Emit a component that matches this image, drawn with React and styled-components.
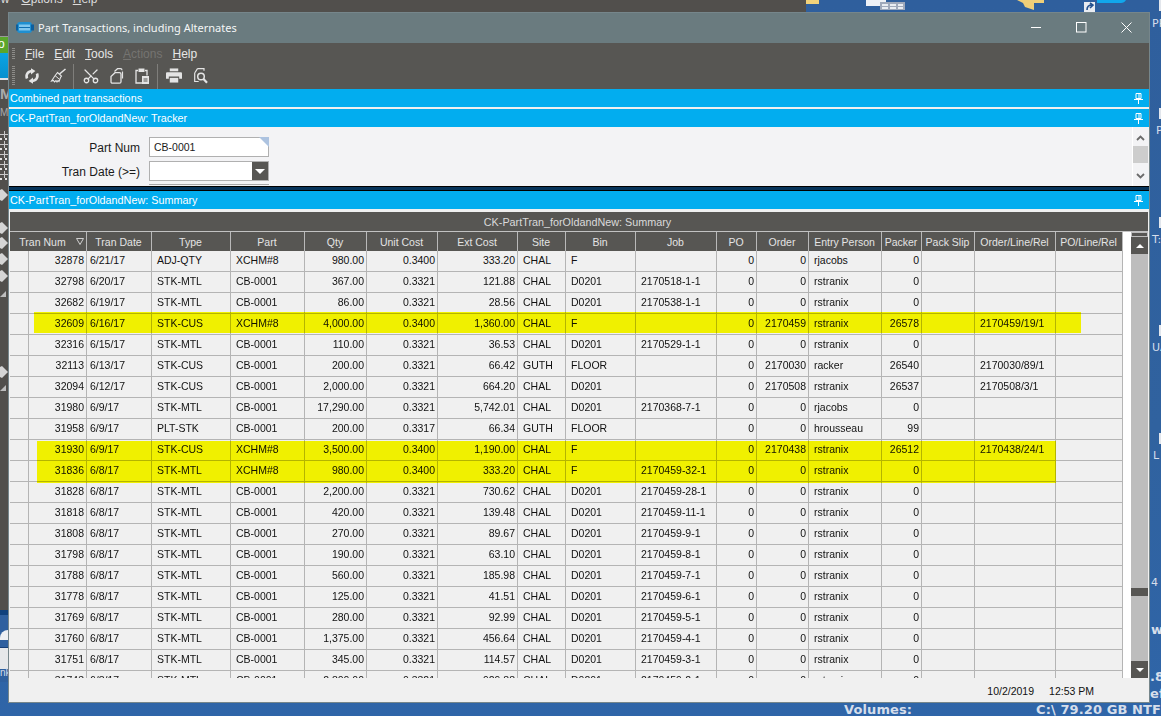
import React from "react";
import styled, { createGlobalStyle } from "styled-components";
import { Scissors } from "lucide-react";

const GlobalStyle = createGlobalStyle`
  html, body {
    margin: 0;
    padding: 0;
    width: 1161px;
    height: 716px;
    overflow: hidden;
    background: #2f609f;
    font-family: "Liberation Sans", Arial, sans-serif;
  }
`;

const columns = [
  { key: "mark", w: 19 },
  { key: "num", w: 58, align: "right" },
  { key: "date", w: 65, pad: 3 },
  { key: "type", w: 79 },
  { key: "part", w: 74 },
  { key: "qty", w: 62, align: "right" },
  { key: "unit", w: 71, align: "right" },
  { key: "ext", w: 80, align: "right" },
  { key: "site", w: 48 },
  { key: "bin", w: 70 },
  { key: "job", w: 81 },
  { key: "po", w: 40, align: "right" },
  { key: "order", w: 52, align: "right" },
  { key: "person", w: 73 },
  { key: "packer", w: 40, align: "right" },
  { key: "slip", w: 53 },
  { key: "rel", w: 81 },
  { key: "poline", w: 67 },
];
const template = columns.map((c) => c.w + "px").join(" ");

const heads = [
  "Tran Date", "Type", "Part", "Qty", "Unit Cost", "Ext Cost", "Site", "Bin", "Job", "PO",
  "Order", "Entry Person", "Packer", "Pack Slip", "Order/Line/Rel", "PO/Line/Rel",
];

const row = (num, date, type, part, qty, unit, ext, site, bin, job, order, person, packer, rel) => ({
  mark: "", num, date, type, part, qty, unit, ext, site, bin, job, po: "0", order, person, packer, slip: "", rel, poline: "",
});

const rows = [
  row("32878", "6/21/17", "ADJ-QTY", "XCHM#8", "980.00", "0.3400", "333.20", "CHAL", "F", "", "0", "rjacobs", "0", ""),
  row("32798", "6/20/17", "STK-MTL", "CB-0001", "367.00", "0.3321", "121.88", "CHAL", "D0201", "2170518-1-1", "0", "rstranix", "0", ""),
  row("32682", "6/19/17", "STK-MTL", "CB-0001", "86.00", "0.3321", "28.56", "CHAL", "D0201", "2170538-1-1", "0", "rstranix", "0", ""),
  row("32609", "6/16/17", "STK-CUS", "XCHM#8", "4,000.00", "0.3400", "1,360.00", "CHAL", "F", "", "2170459", "rstranix", "26578", "2170459/19/1"),
  row("32316", "6/15/17", "STK-MTL", "CB-0001", "110.00", "0.3321", "36.53", "CHAL", "D0201", "2170529-1-1", "0", "rstranix", "0", ""),
  row("32113", "6/13/17", "STK-CUS", "CB-0001", "200.00", "0.3321", "66.42", "GUTH", "FLOOR", "", "2170030", "racker", "26540", "2170030/89/1"),
  row("32094", "6/12/17", "STK-CUS", "CB-0001", "2,000.00", "0.3321", "664.20", "CHAL", "D0201", "", "2170508", "rstranix", "26537", "2170508/3/1"),
  row("31980", "6/9/17", "STK-MTL", "CB-0001", "17,290.00", "0.3321", "5,742.01", "CHAL", "D0201", "2170368-7-1", "0", "rjacobs", "0", ""),
  row("31958", "6/9/17", "PLT-STK", "CB-0001", "200.00", "0.3317", "66.34", "GUTH", "FLOOR", "", "0", "hrousseau", "99", ""),
  row("31930", "6/9/17", "STK-CUS", "XCHM#8", "3,500.00", "0.3400", "1,190.00", "CHAL", "F", "", "2170438", "rstranix", "26512", "2170438/24/1"),
  row("31836", "6/8/17", "STK-MTL", "XCHM#8", "980.00", "0.3400", "333.20", "CHAL", "F", "2170459-32-1", "0", "rstranix", "0", ""),
  row("31828", "6/8/17", "STK-MTL", "CB-0001", "2,200.00", "0.3321", "730.62", "CHAL", "D0201", "2170459-28-1", "0", "rstranix", "0", ""),
  row("31818", "6/8/17", "STK-MTL", "CB-0001", "420.00", "0.3321", "139.48", "CHAL", "D0201", "2170459-11-1", "0", "rstranix", "0", ""),
  row("31808", "6/8/17", "STK-MTL", "CB-0001", "270.00", "0.3321", "89.67", "CHAL", "D0201", "2170459-9-1", "0", "rstranix", "0", ""),
  row("31798", "6/8/17", "STK-MTL", "CB-0001", "190.00", "0.3321", "63.10", "CHAL", "D0201", "2170459-8-1", "0", "rstranix", "0", ""),
  row("31788", "6/8/17", "STK-MTL", "CB-0001", "560.00", "0.3321", "185.98", "CHAL", "D0201", "2170459-7-1", "0", "rstranix", "0", ""),
  row("31778", "6/8/17", "STK-MTL", "CB-0001", "125.00", "0.3321", "41.51", "CHAL", "D0201", "2170459-6-1", "0", "rstranix", "0", ""),
  row("31769", "6/8/17", "STK-MTL", "CB-0001", "280.00", "0.3321", "92.99", "CHAL", "D0201", "2170459-5-1", "0", "rstranix", "0", ""),
  row("31760", "6/8/17", "STK-MTL", "CB-0001", "1,375.00", "0.3321", "456.64", "CHAL", "D0201", "2170459-4-1", "0", "rstranix", "0", ""),
  row("31751", "6/8/17", "STK-MTL", "CB-0001", "345.00", "0.3321", "114.57", "CHAL", "D0201", "2170459-3-1", "0", "rstranix", "0", ""),
  row("31743", "6/8/17", "STK-MTL", "CB-0001", "2,800.00", "0.3321", "929.88", "CHAL", "D0201", "2170459-2-1", "0", "rstranix", "0", ""),
];

const Desktop = styled.div`
  position: relative;
  width: 1161px;
  height: 716px;
  overflow: hidden;
  background: linear-gradient(180deg, #2f5f9d 0%, #30629f 60%, #2f65a8 100%);
`;

const BackWindow = styled.div`
  position: absolute;
  left: 0;
  top: 0;
  width: 806px;
  height: 610px;
  background: #514f4c;
  overflow: hidden;
`;

const BackMenu = styled.div`
  display: flex;
  gap: 10px;
  height: 12px;
  margin-top: -7px;
  margin-bottom: 31px;
  color: #dcdcdc;
  font-size: 12px;
  line-height: 13px;
  span:first-child {
    margin-left: -6px;
    margin-right: 2px;
  }
`;

const Green = styled.div`
  height: 16px;
  border-top: 1px solid #9a9a98;
  background: #5aa62c;
  color: #fff;
  font-size: 12px;
  line-height: 15px;
  text-indent: -6px;
`;

const Teal = styled.div`
  height: 25px;
  background: linear-gradient(180deg, #0aa4e4, #0790cf);
  border-bottom: 2px solid #dfe3ea;
`;

const BackHeading = styled.div`
  height: 24px;
  color: #a9aaad;
  font: bold 15px/20px "Liberation Sans", sans-serif;
  margin-top: 4px;
`;

const BackSmall = styled.div`
  color: #a9aaad;
  font-size: 10px;
  line-height: 10px;
`;

const StripArt = styled.svg`
  display: block;
  margin-top: 11px;
`;

const LowerLeft = styled.div`
  position: absolute;
  left: 0;
  top: 610px;
  width: 8px;
  height: 72px;
  overflow: hidden;
  background: #2f609f;
  border-top: 5px solid #10417c;
  box-sizing: border-box;
`;

const Dome = styled.div`
  width: 8px;
  height: 10px;
  margin-top: 15px;
  background: #eef0f3;
  border-radius: 8px 0 0 0;
`;

const LowerPane = styled.div`
  height: 21px;
  margin-top: 7px;
  background: #e6e8ea;
  border-top: 1px solid #173f77;
`;

const LowerText = styled.div`
  color: #d5dce8;
  font-size: 10px;
  line-height: 10px;
  margin-top: -1px;
`;

const DeskIcons = styled.svg`
  position: absolute;
  left: 806px;
  top: 0;
`;

const DeskLabel = styled.div`
  position: absolute;
  left: ${(p) => p.$x}px;
  top: ${(p) => p.$y}px;
  color: #d6deeb;
  font: ${(p) => (p.$bold ? "bold 13px" : "11px")} "DejaVu Sans", sans-serif;
  line-height: 14px;
  letter-spacing: ${(p) => (p.$bold ? "0.1px" : "0")};
  white-space: nowrap;
`;

const Tick = styled.div`
  position: absolute;
  left: 1159px;
  top: ${(p) => p.$y}px;
  width: 4px;
  height: 11px;
  background: #e2e6ec;
`;

const Window = styled.div`
  position: absolute;
  left: 8px;
  top: 12px;
  width: 1142px;
  height: 691px;
  box-sizing: border-box;
  border: 1px solid #76868b;
  display: flex;
  flex-direction: column;
  background: #f0f0f0;
  overflow: hidden;
`;

const TitleBar = styled.div`
  height: 30px;
  box-sizing: border-box;
  flex: none;
  display: flex;
  align-items: center;
  background: #6a7b7f;
  color: #f4f6f6;
  padding: 0 0 1px 7px;
`;

const TitleText = styled.span`
  margin-left: 4px;
  margin-top: -1px;
  font: 11px "Noto Sans", "Open Sans", sans-serif;
`;

const WinControls = styled.div`
  margin-left: auto;
  display: flex;
  align-items: center;
  gap: 34px;
  padding-right: 17px;
  svg {
    display: block;
  }
`;

const MenuBar = styled.div`
  height: 23px;
  box-sizing: border-box;
  flex: none;
  display: flex;
  align-items: center;
  gap: 10px;
  background: #575653;
  color: #e6e6e6;
  font-size: 12px;
  padding: 0 0 2px 3px;
`;

const Grip = styled.div`
  flex: none;
  width: 3px;
  height: ${(p) => p.$h}px;
  background: repeating-linear-gradient(180deg, #8d8c89 0 1px, transparent 1px 2px);
`;

const MenuItem = styled.span`
  color: ${(p) => (p.$off ? "#757471" : "#e6e6e6")};
  u {
    text-underline-offset: 1px;
  }
`;

const ToolBar = styled.div`
  height: 23px;
  box-sizing: border-box;
  flex: none;
  display: flex;
  align-items: center;
  background: #575653;
  padding: 0 0 4px 3px;
`;

const ToolIcon = styled.svg`
  display: block;
  flex: none;
  margin-left: ${(p) => p.$ml || 0}px;
`;

const CutIcon = styled(Scissors)`
  flex: none;
  margin-left: 8px;
  transform: rotate(-90deg);
`;

const ToolSep = styled.div`
  flex: none;
  width: 1px;
  height: 26px;
  margin-left: ${(p) => p.$ml}px;
  margin-top: 2px;
  background: #7f7e7b;
`;

const Band = styled.div`
  height: 18px;
  flex: none;
  display: flex;
  align-items: center;
  justify-content: space-between;
  background: #02adef;
  color: #fff;
  font-size: 10.8px;
  padding: 0 6px 0 1px;
  margin-bottom: ${(p) => p.$mb || 0}px;
`;

const FormPanel = styled.div`
  height: 59px;
  flex: none;
  display: flex;
  background: #f3f3f5;
  overflow: hidden;
`;

const FormFields = styled.div`
  flex: 1;
  display: grid;
  grid-template-columns: 131px 120px;
  grid-auto-rows: 19px;
  column-gap: 9px;
  row-gap: 5px;
  align-content: start;
  padding-top: 10px;
  font-size: 12px;
  color: #1a1a1a;
`;

const FieldLabel = styled.label`
  text-align: right;
  line-height: 22px;
`;

const TextBox = styled.div`
  position: relative;
  box-sizing: border-box;
  height: 20px;
  background: #fff;
  border: 1px solid #b0b0b0;
  font-size: 10.5px;
  line-height: 19px;
  padding-left: 4px;
  &::after {
    content: "";
    position: absolute;
    right: -1px;
    top: -1px;
    border-top: 10px solid #adc3e0;
    border-left: 10px solid transparent;
  }
`;

const ComboBox = styled.div`
  display: flex;
  justify-content: flex-end;
  box-sizing: border-box;
  height: 20px;
  background: #fff;
  border: 1px solid #b0b0b0;
`;

const ComboBtn = styled.div`
  width: 16px;
  background: #575653;
  display: flex;
  align-items: center;
  justify-content: center;
  &::after {
    content: "";
    border-top: 5px solid #fff;
    border-left: 5px solid transparent;
    border-right: 5px solid transparent;
  }
`;

const PeekBox = styled.div`
  grid-column: 2;
  height: 3px;
  margin-top: -1px;
  border-top: 1px solid #a8a8a8;
`;

const FormScroll = styled.div`
  width: 15px;
  flex: none;
  margin-right: 1px;
  display: flex;
  flex-direction: column;
  align-items: center;
  border-left: 1px solid #fff;
  padding-top: 5px;
`;

const Chevron = styled.svg`
  display: block;
  margin: ${(p) => p.$m};
`;

const FormThumb = styled.div`
  align-self: stretch;
  height: 17px;
  background: #cdcdcd;
`;

const Divider = styled.div`
  height: 5px;
  flex: none;
  background: #07345a;
  border-top: 1px solid #000;
  border-bottom: 1px solid #000;
  box-sizing: border-box;
`;

const GridPanel = styled.div`
  flex: none;
  height: 469px;
  box-sizing: border-box;
  padding: 3px 1px 0 1px;
  background: #f0f0f0;
  display: flex;
  flex-direction: column;
`;

const GroupCaption = styled.div`
  height: 19px;
  flex: none;
  background: #575653;
  color: #dadada;
  font-size: 10.8px;
  line-height: 20px;
  text-align: center;
  padding-right: 3px;
  border-bottom: 1px solid #c2c2c2;
`;

const GridRow = styled.div`
  flex: 1;
  min-height: 0;
  display: flex;
`;

const Table = styled.div`
  width: 1113px;
  flex: none;
  display: flex;
  flex-direction: column;
  overflow: hidden;
`;

const HeadRow = styled.div`
  height: 19px;
  flex: none;
  display: grid;
  grid-template-columns: ${template};
  background: #575653;
`;

const HeadCell = styled.div`
  position: relative;
  grid-column: span ${(p) => p.$span || 1};
  box-sizing: border-box;
  border-right: 1px solid #b9b9b9;
  color: #e4e4e4;
  font-size: 10.5px;
  line-height: 20px;
  text-align: center;
  white-space: nowrap;
  overflow: hidden;
  padding-right: ${(p) => p.$pr ?? 1}px;
`;

const SortMark = styled.svg`
  position: absolute;
  right: 2px;
  top: 6px;
`;

const Body = styled.div`
  position: relative;
  flex: 1;
  overflow: hidden;
  isolation: isolate;
`;

const DataRow = styled.div`
  height: 21px;
  display: grid;
  grid-template-columns: ${template};
`;

const Cell = styled.div`
  box-sizing: border-box;
  border-right: 1px solid #b4b4b4;
  border-bottom: 1px solid #b4b4b4;
  background: #f0f0f0;
  color: #111;
  font-size: 10.5px;
  line-height: 18px;
  white-space: nowrap;
  overflow: hidden;
  text-align: ${(p) => p.$align || "left"};
  padding: ${(p) => (p.$align === "right" ? "0 2px 0 0" : `0 0 0 ${p.$pad ?? 5}px`)};
`;

const Marker = styled.div`
  position: absolute;
  left: ${(p) => p.$x}px;
  top: ${(p) => p.$y}px;
  width: ${(p) => p.$w}px;
  height: ${(p) => p.$h}px;
  background: #ffff00;
  mix-blend-mode: multiply;
`;

const Gutter = styled.div`
  width: 8px;
  flex: none;
  background: #fff;
`;

const ScrollBar = styled.div`
  width: 17px;
  flex: none;
  display: flex;
  flex-direction: column;
  background: #bdbdbd;
`;

const ScrollCap = styled.div`
  height: 3px;
  margin: 1px;
  flex: none;
  background: #575653;
`;

const ScrollBtn = styled.div`
  height: 17px;
  flex: none;
  background: #575653;
  display: flex;
  align-items: center;
  justify-content: center;
  &::after {
    content: "";
    border-left: 4px solid transparent;
    border-right: 4px solid transparent;
    ${(p) => (p.$up ? "border-bottom: 4px solid #fff;" : "border-top: 4px solid #fff;")}
  }
`;

const ScrollTrack = styled.div`
  flex: 1;
  padding-top: 334px;
`;

const ScrollThumb = styled.div`
  height: 8px;
  background: #575653;
`;

const StatusBar = styled.div`
  flex: 1;
  display: flex;
  justify-content: flex-end;
  gap: 15px;
  padding-right: 55px;
  background: #f0f0f0;
  color: #111;
  font-size: 10.5px;
  line-height: 27px;
`;

function Pin() {
  return (
    <svg width="9" height="11" viewBox="0 0 9 11" fill="none">
      <path d="M2 .5h5v5H2z" stroke="#fff" />
      <path d="M5 1v4.500M0 6.500h9M4.500 7v4" stroke="#fff" />
    </svg>
  );
}

function DocIcon() {
  return (
    <svg width="18" height="14" viewBox="0 0 18 14">
      <rect x="1" y="1" width="15" height="11" rx="3" fill="#1f8fd0" />
      <rect x="3" y="3.500" width="11" height="6" fill="#7fc6ee" />
      <path d="M0 3.500h2v6H0zM15 3.500h3v6h-3z" fill="#0d5f9e" />
      <path d="M3 6.500h11" stroke="#0f6fb0" />
    </svg>
  );
}

function StripDrawing() {
  const marks = [2, 12, 22, 32, 42];
  const arrows = [66, 99, 114, 130, 147, 243];
  return (
    <StripArt width="8" height="270" viewBox="0 0 8 270">
      {marks.map((y) => (
        <g key={y}>
          <path d={`M0 ${y + 3.5}h8M4.500 ${y}v7`} stroke="#c9c9c9" />
          <path d={`M0 ${y + 7}h2v2h-2zM5 ${y + 7}h2v2h-2z`} fill="#e2e2e2" />
        </g>
      ))}
      {arrows.map((y) => (
        <polygon key={y} points={`0,${y - 5} 2,${y - 6} 8,${y} 2,${y + 6} 0,${y + 5}`} fill="#d5d5d5" />
      ))}
      <polygon points="0,168 6,162 6,168" fill="#bdbdbd" />
      <polygon points="0,262 6,256 6,262" fill="#bdbdbd" />
    </StripArt>
  );
}

function DesktopIcons() {
  return (
    <DeskIcons width="330" height="14" viewBox="0 0 330 14">
      <rect x="0" y="0" width="13" height="4" fill="#f2d27a" />
      <rect x="60" y="0" width="20" height="6" fill="#eef1f6" />
      <rect x="74" y="2" width="25" height="8" fill="#9fa9bb" />
      <path d="M76 4h6v2h-6zM84 4h6v2h-6zM92 4h5v2h-5zM76 7h6v2h-6zM84 7h6v2h-6zM92 7h5v2h-5z" fill="#e9edf3" />
      <polygon points="211,0 238,0 238,3 228,3 228,10 219,7 217,3" fill="#f0cf78" />
      <rect x="278" y="2" width="11" height="11" fill="#e9ecf1" />
      <path d="M281 10c0-4 2-5 5-5M284 3l3 2-3 3" stroke="#24508e" strokeWidth="1.600" fill="none" />
      <path d="M291 0h29c-1 2-3 3-5 3h-24z" fill="#11a7ec" />
    </DeskIcons>
  );
}

const ink = "#e4e4e4";

function ToolIcons() {
  return (
    <>
      <ToolIcon $ml={9} width="16" height="16" viewBox="0 0 16 16" fill="none">
        <path d="M3 10.500C1.500 6.500 4 3 8.500 3" stroke={ink} strokeWidth="2.600" />
        <path d="M7 .2l4.400 2.800L7 6.400z" fill={ink} />
        <path d="M13 5.500c1.500 4-1 7.500-5.500 7.500" stroke={ink} strokeWidth="2.600" />
        <path d="M9 15.800L4.600 13 9 9.600z" fill={ink} />
      </ToolIcon>
      <ToolIcon $ml={10} width="16" height="16" viewBox="0 0 16 16" fill="none">
        <path d="M9.500 6L15.500 1" stroke={ink} strokeWidth="1.600" />
        <path d="M7.500 4.500l4 3.500-1 1.500-1.500 4-1-1-1 1.500-1-1.500-1.500 1.500-1-1.500-2 .5 3-4.500z" stroke={ink} strokeWidth="1.100" />
        <path d="M5 7.500l4 3.500" stroke={ink} />
      </ToolIcon>
      <ToolSep $ml={7} />
      <CutIcon size={18} color={ink} strokeWidth={1.7} />
      <ToolIcon $ml={10} width="14" height="16" viewBox="0 0 14 16" fill="none">
        <path d="M4.500 3.500L7.500.7H10.500c1 0 1.500.5 1.500 1.500" stroke={ink} strokeWidth="1.200" />
        <path d="M1 8.500L5 4.700h4.500c1 0 1.500.5 1.500 1.500v7.500c0 1-.5 1.500-1.500 1.500h-7c-1 0-1.500-.5-1.500-1.500z" stroke={ink} strokeWidth="1.300" />
        <path d="M12.500 3.500v7" stroke={ink} strokeWidth="1.200" />
      </ToolIcon>
      <ToolIcon $ml={11} width="14" height="16" viewBox="0 0 14 16" fill="none">
        <path d="M3 2.500H1v12.500h6" stroke={ink} strokeWidth="1.300" />
        <path d="M10 2.500h2v5" stroke={ink} strokeWidth="1.300" />
        <rect x="3.500" y=".5" width="6" height="3.500" fill={ink} />
        <path d="M7 8h7v8H7z" fill={ink} />
        <path d="M8.500 11h4M8.500 13h4" stroke="#575653" />
      </ToolIcon>
      <ToolSep $ml={8} />
      <ToolIcon $ml={8} width="16" height="15" viewBox="0 0 17 15">
        <path d="M4 0h9v3H4z" fill={ink} />
        <path d="M1.500 4h14c1 0 1.500.5 1.500 1.500V11h-3V8.500H3V11H0V5.500C0 4.500.5 4 1.500 4z" fill={ink} />
        <path d="M4 10h9v5H4z" fill={ink} />
      </ToolIcon>
      <ToolIcon $ml={12} width="14" height="16" viewBox="0 0 14 16" fill="none">
        <path d="M3.500.7H10v2M.7 5L3.500.7M.7 5v8.500h4" stroke={ink} strokeWidth="1.200" />
        <circle cx="7" cy="8.500" r="3.300" stroke={ink} strokeWidth="1.500" />
        <path d="M9.500 11l3.500 3.800" stroke={ink} strokeWidth="2.200" />
      </ToolIcon>
    </>
  );
}

export default function App() {
  return (
    <>
      <GlobalStyle />
      <Desktop>
        <BackWindow>
          <BackMenu>
            <span>ew</span>
            <span><u>O</u>ptions</span>
            <span><u>H</u>elp</span>
          </BackMenu>
          <Green>ro</Green>
          <Teal />
          <BackHeading>M</BackHeading>
          <BackSmall>MA</BackSmall>
          <StripDrawing />
        </BackWindow>
        <LowerLeft>
          <Dome />
          <LowerPane />
          <LowerText>nk</LowerText>
        </LowerLeft>
        <DesktopIcons />
        <Tick $y={0} />
        <Tick $y={108} />
        <Tick $y={217} />
        <Tick $y={325} />
        <Tick $y={433} />
        <DeskLabel $x={1152} $y={17}>PR</DeskLabel>
        <DeskLabel $x={1156} $y={124}>P</DeskLabel>
        <DeskLabel $x={1152} $y={233}>T:</DeskLabel>
        <DeskLabel $x={1152} $y={341}>UA</DeskLabel>
        <DeskLabel $x={1153} $y={449}>L</DeskLabel>
        <DeskLabel $x={1151} $y={576}>4</DeskLabel>
        <DeskLabel $x={1151} $y={623} $bold>w</DeskLabel>
        <DeskLabel $x={1150} $y={670} $bold>.8</DeskLabel>
        <DeskLabel $x={1150} $y={687} $bold>ef</DeskLabel>
        <DeskLabel $x={844} $y={703} $bold>Volumes:</DeskLabel>
        <DeskLabel $x={1036} $y={703} $bold>C:\ 79.20 GB NTFS</DeskLabel>

        <Window>
          <TitleBar>
            <DocIcon />
            <TitleText>Part Transactions, including Alternates</TitleText>
            <WinControls>
              <svg width="11" height="11" viewBox="0 0 11 11"><path d="M0 5.500h10" stroke="#fff" /></svg>
              <svg width="11" height="11" viewBox="0 0 11 11"><rect x=".5" y=".5" width="9.500" height="9.500" fill="none" stroke="#fff" /></svg>
              <svg width="11" height="11" viewBox="0 0 11 11"><path d="M.5.500l10 10M10.500.500l-10 10" stroke="#fff" /></svg>
            </WinControls>
          </TitleBar>
          <MenuBar>
            <Grip $h={12} />
            <MenuItem><u>F</u>ile</MenuItem>
            <MenuItem><u>E</u>dit</MenuItem>
            <MenuItem><u>T</u>ools</MenuItem>
            <MenuItem $off><u>A</u>ctions</MenuItem>
            <MenuItem><u>H</u>elp</MenuItem>
          </MenuBar>
          <ToolBar>
            <Grip $h={19} />
            <ToolIcons />
          </ToolBar>
          <Band $mb={2}>
            <span>Combined part transactions</span>
            <Pin />
          </Band>
          <Band>
            <span>CK-PartTran_forOldandNew: Tracker</span>
            <Pin />
          </Band>
          <FormPanel>
            <FormFields>
              <FieldLabel>Part Num</FieldLabel>
              <TextBox>CB-0001</TextBox>
              <FieldLabel>Tran Date (&gt;=)</FieldLabel>
              <ComboBox><ComboBtn /></ComboBox>
              <PeekBox />
            </FormFields>
            <FormScroll>
              <Chevron $m="3px 0 5px" width="9" height="6" viewBox="0 0 9 6"><path d="M1 5l3.500-3.500L8 5" fill="none" stroke="#6b6b6b" strokeWidth="1.800" /></Chevron>
              <FormThumb />
              <Chevron $m="10px 0 0" width="9" height="6" viewBox="0 0 9 6"><path d="M1 1l3.500 3.500L8 1" fill="none" stroke="#6b6b6b" strokeWidth="1.800" /></Chevron>
            </FormScroll>
          </FormPanel>
          <Divider />
          <Band>
            <span>CK-PartTran_forOldandNew: Summary</span>
            <Pin />
          </Band>
          <GridPanel>
            <GroupCaption>CK-PartTran_forOldandNew: Summary</GroupCaption>
            <GridRow>
              <Table>
                <HeadRow>
                  <HeadCell $span={2} $pr={11}>
                    Tran Num
                    <SortMark width="8" height="7" viewBox="0 0 8 7">
                      <path d="M.5.500h7L4 6.500z" fill="none" stroke="#cfcfcf" />
                    </SortMark>
                  </HeadCell>
                  {heads.map((label) => (
                    <HeadCell key={label}>{label}</HeadCell>
                  ))}
                </HeadRow>
                <Body>
                  {rows.map((r) => (
                    <DataRow key={r.num}>
                      {columns.map((c) => (
                        <Cell key={c.key} $align={c.align} $pad={c.pad}>
                          {r[c.key]}
                        </Cell>
                      ))}
                    </DataRow>
                  ))}
                  <Marker $x={24} $y={61} $w={1047} $h={21} />
                  <Marker $x={27} $y={190} $w={1019} $h={42} />
                </Body>
              </Table>
              <Gutter />
              <ScrollBar>
                <ScrollCap />
                <ScrollBtn $up />
                <ScrollTrack>
                  <ScrollThumb />
                </ScrollTrack>
                <ScrollBtn />
              </ScrollBar>
            </GridRow>
          </GridPanel>
          <StatusBar>
            <span>10/2/2019</span>
            <span>12:53 PM</span>
          </StatusBar>
        </Window>
      </Desktop>
    </>
  );
}
